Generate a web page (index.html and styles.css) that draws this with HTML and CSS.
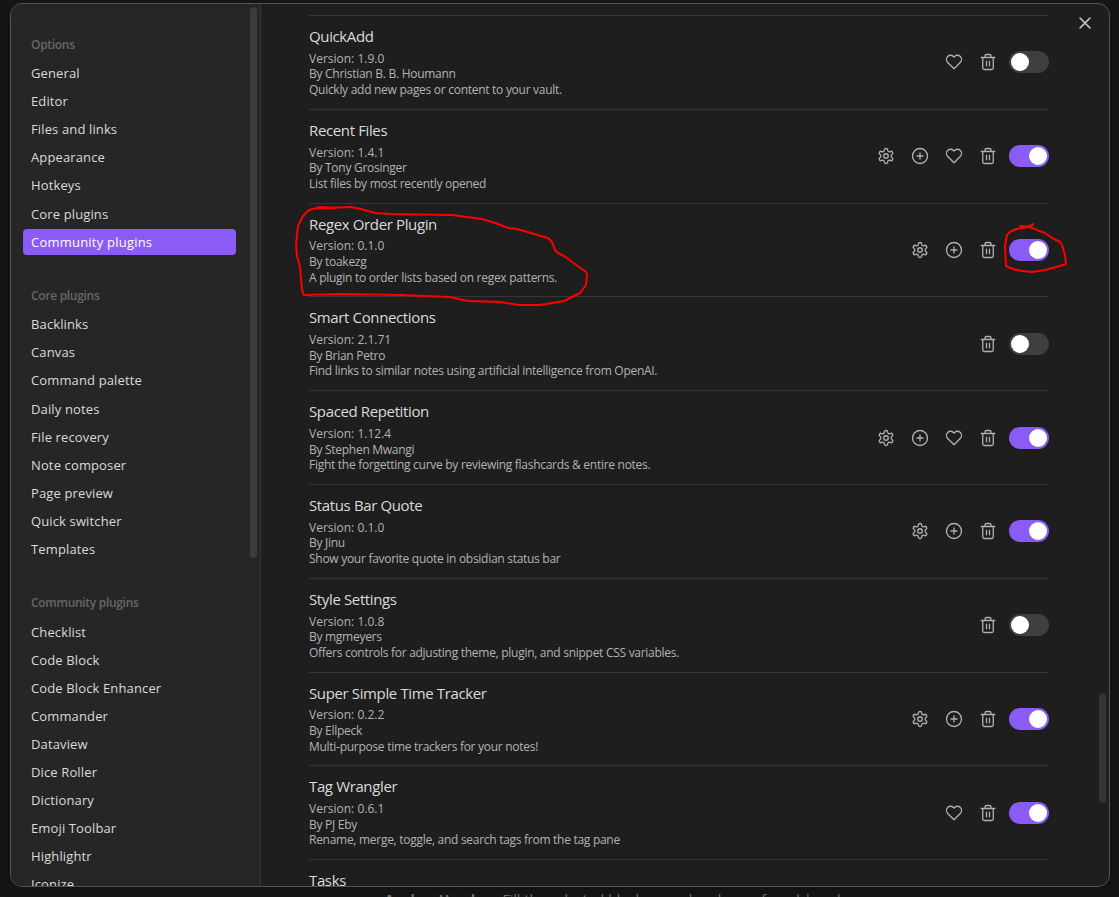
FILE: index.html
```html
<!DOCTYPE html>
<html lang="en">
<head>
<meta charset="utf-8">
<title>Settings</title>
<link rel="stylesheet" href="styles.css">
</head>
<body>
<svg class="sprite" aria-hidden="true">
  <symbol id="gear" viewBox="0 0 24 24"><path d="M12.22 2h-.44a2 2 0 0 0-2 2v.18a2 2 0 0 1-1 1.73l-.43.25a2 2 0 0 1-2 0l-.15-.08a2 2 0 0 0-2.73.73l-.22.38a2 2 0 0 0 .73 2.73l.15.1a2 2 0 0 1 1 1.72v.51a2 2 0 0 1-1 1.74l-.15.09a2 2 0 0 0-.73 2.73l.22.38a2 2 0 0 0 2.73.73l.15-.08a2 2 0 0 1 2 0l.43.25a2 2 0 0 1 1 1.73V20a2 2 0 0 0 2 2h.44a2 2 0 0 0 2-2v-.18a2 2 0 0 1 1-1.73l.43-.25a2 2 0 0 1 2 0l.15.08a2 2 0 0 0 2.73-.73l.22-.39a2 2 0 0 0-.73-2.73l-.15-.08a2 2 0 0 1-1-1.74v-.5a2 2 0 0 1 1-1.74l.15-.09a2 2 0 0 0 .73-2.73l-.22-.38a2 2 0 0 0-2.73-.73l-.15.08a2 2 0 0 1-2 0l-.43-.25a2 2 0 0 1-1-1.73V4a2 2 0 0 0-2-2z"/><circle cx="12" cy="12" r="3"/></symbol>
  <symbol id="plus" viewBox="0 0 24 24"><circle cx="12" cy="12" r="10"/><path d="M8 12h8M12 8v8"/></symbol>
  <symbol id="heart" viewBox="0 0 24 24"><path d="M20.42 4.58a5.4 5.4 0 0 0-7.65 0l-.77.78-.77-.78a5.4 5.4 0 0 0-7.65 0C1.46 6.7 1.33 10.28 4 13l8 8 8-8c2.67-2.72 2.54-6.3.42-8.42z"/></symbol>
  <symbol id="trash" viewBox="0 0 24 24"><path d="M3 6h18M19 6v14c0 1-1 2-2 2H7c-1 0-2-1-2-2V6M8 6V4c0-1 1-2 2-2h4c1 0 2 1 2 2v2M10 11v6M14 11v6"/></symbol>
  <symbol id="close" viewBox="0 0 24 24"><path d="M18.500 5.500l-13 13M5.500 5.500l13 13"/></symbol>
</svg>

<p class="backdrop-text">• <b>Anchor Header</b> - Fill the selected block reused and use of a url | and</p>

<div class="modal">
  <nav class="sidebar">
    <div class="group">
      <h2>Options</h2>
      <a>General</a><a>Editor</a><a>Files and links</a><a>Appearance</a><a>Hotkeys</a><a>Core plugins</a><a class="active">Community plugins</a>
    </div>
    <div class="group">
      <h2>Core plugins</h2>
      <a>Backlinks</a><a>Canvas</a><a>Command palette</a><a>Daily notes</a><a>File recovery</a><a>Note composer</a><a>Page preview</a><a>Quick switcher</a><a>Templates</a>
    </div>
    <div class="group">
      <h2>Community plugins</h2>
      <a>Checklist</a><a>Code Block</a><a>Code Block Enhancer</a><a>Commander</a><a>Dataview</a><a>Dice Roller</a><a>Dictionary</a><a>Emoji Toolbar</a><a>Highlightr</a><a>Iconize</a>
    </div>
    <span class="thumb thumb-nav"></span>
  </nav>
  <main class="content">
    <section class="row">
      <div class="info"><h3>QuickAdd</h3><p class="version">Version: 1.9.0</p><p>By Christian B. B. Houmann</p><p>Quickly add new pages or content to your vault.</p></div>
      <div class="controls"><svg class="icon"><use href="#heart"/></svg><svg class="icon"><use href="#trash"/></svg><span class="toggle"></span></div>
    </section>
    <section class="row">
      <div class="info"><h3>Recent Files</h3><p class="version">Version: 1.4.1</p><p>By Tony Grosinger</p><p>List files by most recently opened</p></div>
      <div class="controls"><svg class="icon"><use href="#gear"/></svg><svg class="icon"><use href="#plus"/></svg><svg class="icon"><use href="#heart"/></svg><svg class="icon"><use href="#trash"/></svg><span class="toggle on"></span></div>
    </section>
    <section class="row">
      <div class="info"><h3>Regex Order Plugin</h3><p class="version">Version: 0.1.0</p><p>By toakezg</p><p>A plugin to order lists based on regex patterns.</p></div>
      <div class="controls"><svg class="icon"><use href="#gear"/></svg><svg class="icon"><use href="#plus"/></svg><svg class="icon"><use href="#trash"/></svg><span class="toggle on"></span></div>
    </section>
    <section class="row">
      <div class="info"><h3>Smart Connections</h3><p class="version">Version: 2.1.71</p><p>By Brian Petro</p><p>Find links to similar notes using artificial intelligence from OpenAI.</p></div>
      <div class="controls"><svg class="icon"><use href="#trash"/></svg><span class="toggle"></span></div>
    </section>
    <section class="row">
      <div class="info"><h3>Spaced Repetition</h3><p class="version">Version: 1.12.4</p><p>By Stephen Mwangi</p><p>Fight the forgetting curve by reviewing flashcards &amp; entire notes.</p></div>
      <div class="controls"><svg class="icon"><use href="#gear"/></svg><svg class="icon"><use href="#plus"/></svg><svg class="icon"><use href="#heart"/></svg><svg class="icon"><use href="#trash"/></svg><span class="toggle on"></span></div>
    </section>
    <section class="row">
      <div class="info"><h3>Status Bar Quote</h3><p class="version">Version: 0.1.0</p><p>By Jinu</p><p>Show your favorite quote in obsidian status bar</p></div>
      <div class="controls"><svg class="icon"><use href="#gear"/></svg><svg class="icon"><use href="#plus"/></svg><svg class="icon"><use href="#trash"/></svg><span class="toggle on"></span></div>
    </section>
    <section class="row">
      <div class="info"><h3>Style Settings</h3><p class="version">Version: 1.0.8</p><p>By mgmeyers</p><p>Offers controls for adjusting theme, plugin, and snippet CSS variables.</p></div>
      <div class="controls"><svg class="icon"><use href="#trash"/></svg><span class="toggle"></span></div>
    </section>
    <section class="row">
      <div class="info"><h3>Super Simple Time Tracker</h3><p class="version">Version: 0.2.2</p><p>By Ellpeck</p><p>Multi-purpose time trackers for your notes!</p></div>
      <div class="controls"><svg class="icon"><use href="#gear"/></svg><svg class="icon"><use href="#plus"/></svg><svg class="icon"><use href="#trash"/></svg><span class="toggle on"></span></div>
    </section>
    <section class="row">
      <div class="info"><h3>Tag Wrangler</h3><p class="version">Version: 0.6.1</p><p>By PJ Eby</p><p>Rename, merge, toggle, and search tags from the tag pane</p></div>
      <div class="controls"><svg class="icon"><use href="#heart"/></svg><svg class="icon"><use href="#trash"/></svg><span class="toggle on"></span></div>
    </section>
    <section class="row">
      <div class="info"><h3>Tasks</h3></div>
    </section>
    <svg class="icon close"><use href="#close"/></svg>
    <span class="thumb thumb-main"></span>
  </main>
</div>

<svg class="ink" viewBox="0 0 1119 897" aria-hidden="true">
  <path d="M317 208.500L351 207L361 209L375 213L390 214L452 215L482 219L498 224L508 228L517 229L548 238L552 242L555 250L558 253L564 256L586 272L587 275L586 285L580 293L564 301L540 305L520 305L500 302L468 301L450 297L400 295L340 294L304 295L302 290L301 278L300 267L297 256L296 245L298 226L303 216L309 210L320 207L336 208"/>
  <path d="M1020 226L1025 227L1033 225M1033 224L1028 227L1016 229L1010 232L1007 235L1005 246L1006 266L1013 269L1022 271L1032 272L1045 270L1056 267L1066 264L1065 255L1062 245L1060 242L1052 238L1045 233L1037 230L1030 227L1021 226"/>
</svg>
</body>
</html>
```
FILE: styles.css
```css
* { box-sizing: border-box; }
body {
  margin: 0;
  width: 1119px;
  height: 897px;
  overflow: hidden;
  position: relative;
  background: #161616;
  color: #dadada;
  font-family: "Open Sans", "Noto Sans", sans-serif;
}
h2, h3, p { margin: 0; font-weight: 400; white-space: nowrap; }
.sprite { display: none; }
.modal {
  margin: 3px 0 0 10px;
  width: 1100px;
  height: 884px;
  display: flex;
  position: relative;
  overflow: hidden;
  border: 1px solid #555;
  border-radius: 12px;
  background: #1e1e1e;
  box-shadow: 0 4px 12px rgba(0, 0, 0, .25);
}
.sidebar {
  width: 250px;
  flex: none;
  position: relative;
  overflow: hidden;
  padding: 29px 24px 0 12px;
  background: #262626;
  border-right: 1px solid #363636;
}
.group { margin-bottom: 29.400px; }
.group h2 {
  padding-left: 8px;
  height: 27.100px;
  line-height: 23px;
  font-size: 12px;
  font-weight: 600;
  letter-spacing: -.3px;
  color: #666;
}
.group a {
  display: block;
  height: 26.100px;
  margin-bottom: 2px;
  padding-left: 8px;
  line-height: 26px;
  font-size: 13px;
  letter-spacing: .13px;
  white-space: nowrap;
  border-radius: 4px;
}
.group a.active { background: #8a5cf5; color: #fff; letter-spacing: .22px; }
.content {
  flex: 1;
  padding: 11px 60px 0 48px;
  position: relative;
  overflow: hidden;
}
.row {
  display: flex;
  justify-content: space-between;
  height: 93.800px;
  padding: 10px 0 11px;
  border-top: 1px solid #363636;
}
.info h3 { font-size: 15px; line-height: 20px; margin-bottom: 4.800px; letter-spacing: -.37px; }
.info p { font-size: 12px; line-height: 15.600px; letter-spacing: -.28px; color: #b3b3b3; }
.info .version { letter-spacing: 0; }
.controls { display: flex; align-items: center; gap: 16px; height: 70.800px; margin-top: 1px; }
.icon {
  width: 18px;
  height: 18px;
  fill: none;
  stroke: #b0b0b0;
  stroke-width: 1.750;
  stroke-linecap: round;
  stroke-linejoin: round;
}
.toggle {
  width: 40px;
  height: 22px;
  margin-left: -4px;
  padding: 2px;
  display: flex;
  border-radius: 11px;
  background: #3f3f3f;
}
.toggle::before {
  content: "";
  width: 18px;
  height: 18px;
  border-radius: 50%;
  background: #fff;
}
.toggle.on { background: #8a5cf5; justify-content: flex-end; }
.close { position: absolute; top: 10px; right: 15px; stroke-width: 2.200; stroke: #bbb; }
.thumb { position: absolute; width: 7px; border-radius: 4px; background: #3b3b3b; }
.thumb-nav { top: 3px; right: 3px; height: 551px; }
.thumb-main { top: 689px; right: 3px; height: 110px; background: #353535; }
.backdrop-text {
  position: absolute;
  left: 369px;
  top: 890px;
  font-size: 14px;
  line-height: 20px;
  word-spacing: .5px;
  color: #777;
}
.backdrop-text b { margin-left: 6px; }
.ink {
  position: absolute;
  inset: 0;
  width: 1119px;
  height: 897px;
  fill: none;
  stroke: #f00;
  stroke-width: 2;
  stroke-linecap: round;
  stroke-linejoin: round;
  pointer-events: none;
}
```
